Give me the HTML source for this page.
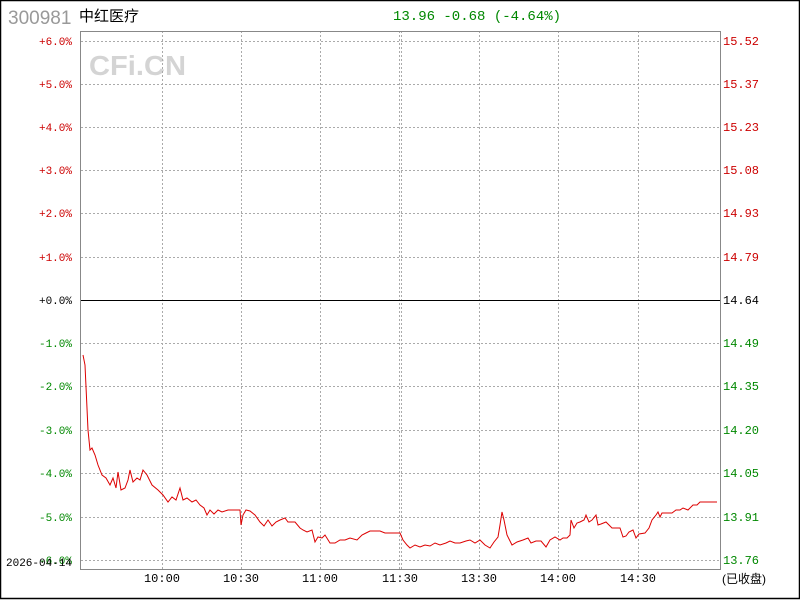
<!DOCTYPE html>
<html><head><meta charset="utf-8"><style>
body{margin:0;background:#fff;width:800px;height:600px;overflow:hidden;font-family:"Liberation Mono","Noto Sans CJK SC",monospace}
</style></head><body>
<svg width="800" height="600" xmlns="http://www.w3.org/2000/svg" style="position:absolute;left:0;top:0">
<rect x="0.5" y="0.5" width="799" height="598" fill="#fff" stroke="#000" stroke-width="1.5"/>
<text x="8" y="24" font-family="Liberation Sans,sans-serif" font-size="19" fill="#999">300981</text>
<text x="79" y="21" font-family="Liberation Sans,'Noto Sans CJK SC',sans-serif" font-size="15" fill="#000">中红医疗</text>
<text x="393" y="20" font-size="14" fill="#008800">13.96 -0.68 (-4.64%)</text>
<text x="89" y="75" font-family="Liberation Sans,sans-serif" font-weight="bold" font-size="28" fill="#d4d4d4" textLength="97" lengthAdjust="spacingAndGlyphs">CFi.CN</text>
<g stroke="#aaa" stroke-dasharray="2,2" stroke-width="1">
<line x1="81" y1="41.5" x2="720" y2="41.5"/><line x1="81" y1="84.5" x2="720" y2="84.5"/><line x1="81" y1="127.5" x2="720" y2="127.5"/><line x1="81" y1="170.5" x2="720" y2="170.5"/><line x1="81" y1="213.5" x2="720" y2="213.5"/><line x1="81" y1="257.5" x2="720" y2="257.5"/>
<line x1="81" y1="343.5" x2="720" y2="343.5"/><line x1="81" y1="386.5" x2="720" y2="386.5"/><line x1="81" y1="430.5" x2="720" y2="430.5"/><line x1="81" y1="473.5" x2="720" y2="473.5"/><line x1="81" y1="517.5" x2="720" y2="517.5"/><line x1="81" y1="560.5" x2="720" y2="560.5"/>
<line x1="162.5" y1="31" x2="162.5" y2="569"/><line x1="241.5" y1="31" x2="241.5" y2="569"/><line x1="320.5" y1="31" x2="320.5" y2="569"/><line x1="399.5" y1="31" x2="399.5" y2="569"/><line x1="401.5" y1="31" x2="401.5" y2="569"/><line x1="479.5" y1="31" x2="479.5" y2="569"/><line x1="558.5" y1="31" x2="558.5" y2="569"/><line x1="638.5" y1="31" x2="638.5" y2="569"/>
</g>
<line x1="81" y1="300.5" x2="720" y2="300.5" stroke="#000"/>
<rect x="80.5" y="31.5" width="640" height="538" fill="none" stroke="#888"/>
<g font-size="11" text-anchor="end">
<text x="72" y="45" fill="#cc0000">+6.0%</text><text x="72" y="88" fill="#cc0000">+5.0%</text><text x="72" y="131" fill="#cc0000">+4.0%</text><text x="72" y="174" fill="#cc0000">+3.0%</text><text x="72" y="217" fill="#cc0000">+2.0%</text><text x="72" y="261" fill="#cc0000">+1.0%</text><text x="72" y="304" fill="#000">+0.0%</text>
<text x="72" y="347" fill="#008800">-1.0%</text><text x="72" y="390" fill="#008800">-2.0%</text><text x="72" y="434" fill="#008800">-3.0%</text><text x="72" y="477" fill="#008800">-4.0%</text><text x="72" y="521" fill="#008800">-5.0%</text><text x="72" y="564" fill="#008800">-6.0%</text>
</g>
<text x="6" y="566" font-size="11" fill="#000">2026-04-14</text>
<g font-size="12">
<text x="723" y="45" fill="#cc0000">15.52</text><text x="723" y="88" fill="#cc0000">15.37</text><text x="723" y="131" fill="#cc0000">15.23</text><text x="723" y="174" fill="#cc0000">15.08</text><text x="723" y="217" fill="#cc0000">14.93</text><text x="723" y="261" fill="#cc0000">14.79</text><text x="723" y="304" fill="#000">14.64</text>
<text x="723" y="347" fill="#008800">14.49</text><text x="723" y="390" fill="#008800">14.35</text><text x="723" y="434" fill="#008800">14.20</text><text x="723" y="477" fill="#008800">14.05</text><text x="723" y="521" fill="#008800">13.91</text><text x="723" y="564" fill="#008800">13.76</text>
</g>
<g font-size="12" text-anchor="middle" fill="#000">
<text x="162" y="582">10:00</text><text x="241" y="582">10:30</text><text x="320" y="582">11:00</text><text x="400" y="582">11:30</text><text x="479" y="582">13:30</text><text x="558" y="582">14:00</text><text x="638" y="582">14:30</text>
</g>
<text x="722" y="583" font-family="Liberation Sans,'Noto Sans CJK SC',sans-serif" font-size="12" fill="#000">(已收盘)</text>
<polyline fill="none" stroke="#dd0000" stroke-width="1" points="83,355 85,365 88,430 90,450 92,448 95,455 98,465 102,475 106,478 110,485 113,478 116,488 118,472 121,490 125,488 128,480 130,470 133,482 137,478 140,480 143,470 147,475 152,485 158,490 163,495 168,502 172,497 176,500 180,488 183,500 187,498 192,502 196,500 200,505 204,508 207,515 210,510 214,514 218,510 222,512 228,510 236,510 240,510 241,525 243,515 246,510 250,511 255,515 260,522 264,526 268,520 272,526 276,522 280,520 285,518 288,522 295,522 300,528 303,530 307,532 312,530 315,542 318,537 322,538 325,535 330,543 335,543 340,540 345,540 350,538 357,540 362,535 366,533 370,531 380,531 385,533 392,533 400,533 403,540 407,545 410,548 415,545 420,547 425,545 430,546 435,543 440,545 446,543 450,541 455,543 460,543 466,541 470,540 475,543 480,540 485,545 490,548 494,542 498,537 500,525 502,512 504,520 507,535 512,545 517,542 523,540 528,538 531,543 536,541 541,541 546,547 550,540 555,537 560,540 563,538 567,538 570,535 571,520 574,528 577,523 580,522 584,520 586,515 589,522 592,520 596,515 598,525 601,524 606,522 612,528 618,528 620,528 623,537 626,536 629,532 633,530 636,538 639,534 645,533 649,528 652,520 656,515 658,512 660,517 662,513 667,513 672,513 676,510 680,510 683,508 688,510 693,505 697,505 700,502 704,502 709,502 717,502"/>
</svg>
</body></html>
